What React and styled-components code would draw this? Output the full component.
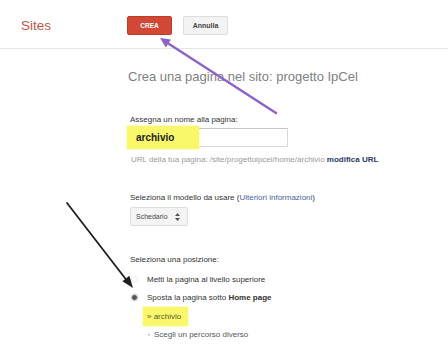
import React from "react"
import styled, { createGlobalStyle } from "styled-components"

const GlobalStyle = createGlobalStyle`
  body {
    margin: 0;
    background: #fff;
    font-family: "Liberation Sans", Arial, sans-serif;
    color: #222;
  }
`

export default function App() {
  return (
    <Page>
      <GlobalStyle />
      <Header>
        <Brand>Sites</Brand>
        <ButtonGroup>
          <Button primary>CREA</Button>
          <Button>Annulla</Button>
        </ButtonGroup>
      </Header>
      <Content>
        <Title>Crea una pagina nel sito: progetto IpCel</Title>

        <Label gap={30}>Assegna un nome alla pagina:</Label>
        <NameInput>
          <Marker>archivio</Marker>
        </NameInput>
        <UrlLine>
          URL della tua pagina: /site/progettoipcei/home/archivio{" "}
          <UrlLink>modifica URL</UrlLink>
        </UrlLine>

        <Label gap={28}>
          Seleziona il modello da usare (<InfoLink>Ulteriori informazioni</InfoLink>)
        </Label>
        <Select>
          Schedario
          <svg width="5" height="8" viewBox="0 0 5 8">
            <polygon points="0,3 5,3 2.5,0" fill="#555" />
            <polygon points="0,5 5,5 2.5,8" fill="#555" />
          </svg>
        </Select>

        <Label gap={29}>Seleziona una posizione:</Label>
        <RadioList>
          <RadioRow>
            <Radio />
            Metti la pagina al livello superiore
          </RadioRow>
          <RadioRow>
            <Radio checked />
            <span>
              Sposta la pagina sotto <b>Home page</b>
            </span>
          </RadioRow>
        </RadioList>
        <Crumb>» archivio</Crumb>
        <OtherPath>
          <Bullet>‣</Bullet>Scegli un percorso diverso
        </OtherPath>
      </Content>

      {/* annotation arrows drawn over the screenshot */}
      <Annotations viewBox="0 0 448 348">
        <line x1="276" y1="113" x2="166" y2="42" stroke="#8d62cc" strokeWidth="2.4" strokeLinecap="round" />
        <polygon points="160,38 171,39.6 165.8,47.4" fill="#8d62cc" />
        <line x1="67" y1="203" x2="128" y2="282" stroke="#1f1f1f" strokeWidth="1.8" strokeLinecap="round" />
        <polygon points="133,288 122.4,281.2 129.4,275.8" fill="#1f1f1f" />
      </Annotations>
    </Page>
  )
}

const Page = styled.div`
  position: relative;
  width: 448px;
  height: 348px;
  overflow: hidden;
`

const Header = styled.div`
  height: 48px;
  border-bottom: 1px solid #e5e5e5;
  display: flex;
  align-items: center;
`

const Brand = styled.div`
  width: 106px;
  padding-left: 21px;
  padding-top: 2px;
  font-size: 13.5px;
  color: #c4554c;
`

const ButtonGroup = styled.div`
  display: flex;
  gap: 11px;
  padding-top: 3px;
`

const Button = styled.div`
  width: 45px;
  height: 19px;
  box-sizing: border-box;
  border-radius: 2px;
  display: flex;
  align-items: center;
  justify-content: center;
  font-size: ${(p) => (p.primary ? "6.5px" : "7px")};
  font-weight: bold;
  background: ${(p) => (p.primary ? "#d14836" : "#f3f3f3")};
  border: 1px solid ${(p) => (p.primary ? "#c0392b" : "#dcdcdc")};
  color: ${(p) => (p.primary ? "#fff" : "#444")};
`

const Content = styled.div`
  padding-left: 128px;
  padding-top: 20px;
  font-size: 8px;
`

const Title = styled.div`
  font-size: 13px;
  line-height: 16px;
  color: #808080;
`

const Label = styled.div`
  margin-top: ${(p) => p.gap}px;
  margin-left: 2px;
  line-height: 10px;
  color: #333;
`

const InfoLink = styled.span`
  color: #4a5fa8;
`

const NameInput = styled.div`
  margin-top: 3px;
  width: 160px;
  height: 19px;
  box-sizing: border-box;
  border: 1px solid #d9d9d9;
  border-top-color: #c6c6c6;
  display: flex;
  align-items: center;
`

const Marker = styled.span`
  display: inline-block;
  margin-left: -2px;
  width: 72px;
  height: 23px;
  box-sizing: border-box;
  padding-left: 9px;
  line-height: 23px;
  background: #f8f86a;
  box-shadow: 0 0 2px #f8f86a;
  font-size: 10px;
  font-weight: bold;
  color: #222;
`

const UrlLine = styled.div`
  margin-top: 8px;
  margin-left: 3px;
  line-height: 10px;
  color: #9a9a9a;
`

const UrlLink = styled.span`
  color: #2a3a6a;
  font-weight: bold;
`

const Select = styled.div`
  margin-top: 4px;
  margin-left: 2px;
  width: 58px;
  height: 19px;
  box-sizing: border-box;
  border: 1px solid #dedede;
  border-radius: 2px;
  background: #f4f4f4;
  display: flex;
  align-items: center;
  padding-left: 5px;
  gap: 7px;
  font-size: 7px;
  color: #444;
`

const RadioList = styled.div`
  margin-top: 5px;
  margin-left: 3px;
`

const RadioRow = styled.div`
  display: flex;
  align-items: center;
  gap: 9px;
  height: 18px;
  color: #333;
`

const Radio = styled.span`
  width: 7px;
  height: 7px;
  border-radius: 50%;
  box-sizing: border-box;
  border: 1px solid ${(p) => (p.checked ? "#e0e0e0" : "#e8e8e8")};
  background: ${(p) => (p.checked ? "#555" : "#fff")};
  box-shadow: ${(p) => (p.checked ? "0 0 0 1px #eee" : "none")};
`

const Crumb = styled.div`
  margin-top: 1px;
  margin-left: 15px;
  width: 45px;
  height: 19px;
  box-sizing: border-box;
  padding-left: 4px;
  line-height: 19px;
  background: #f8f86a;
  box-shadow: 0 0 2px #f8f86a;
  color: #5a5a3a;
`

const OtherPath = styled.div`
  margin-top: 4px;
  margin-left: 20px;
  line-height: 10px;
  color: #555;
`

const Bullet = styled.span`
  font-size: 6px;
  margin-right: 4px;
  color: #777;
`

const Annotations = styled.svg`
  position: absolute;
  top: 0;
  left: 0;
  width: 448px;
  height: 348px;
  pointer-events: none;
`
